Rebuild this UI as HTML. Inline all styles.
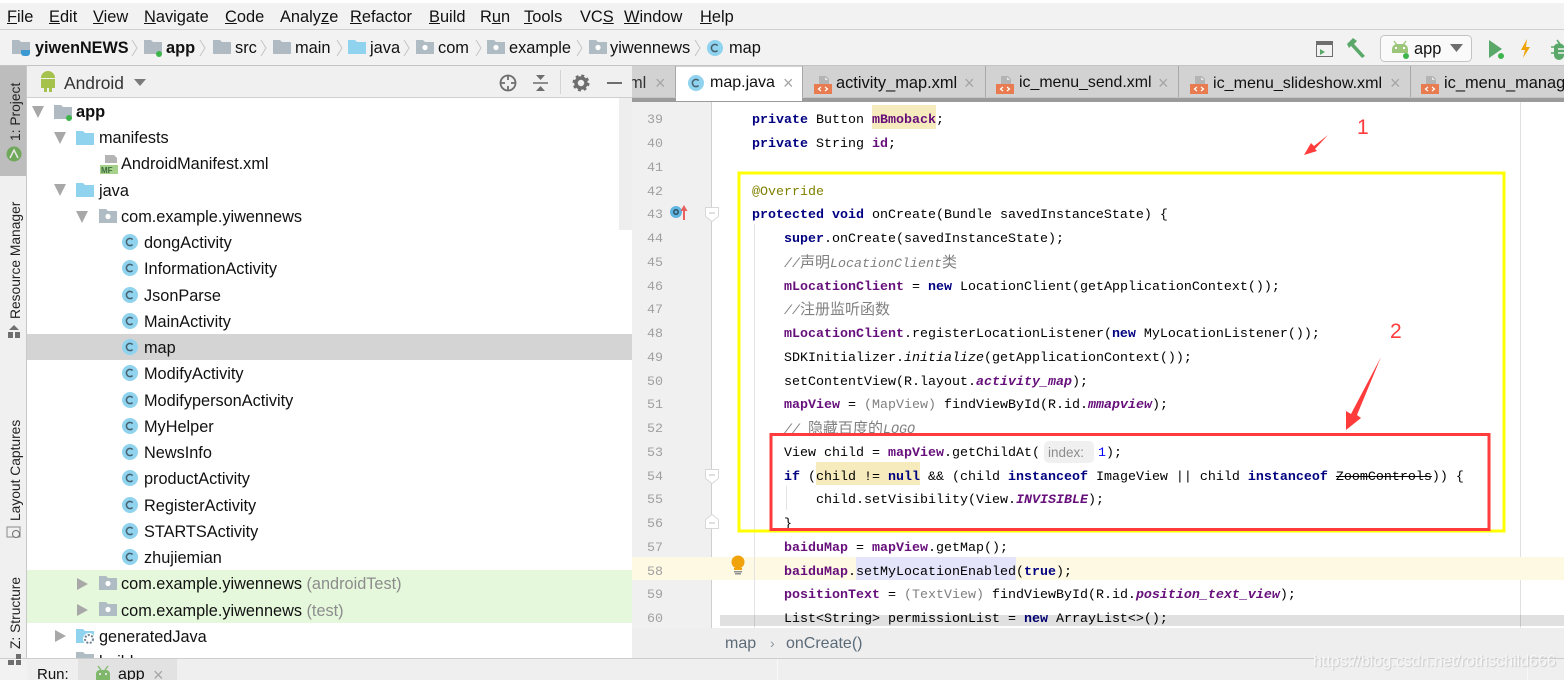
<!DOCTYPE html>
<html><head><meta charset="utf-8"><style>
html,body{margin:0;padding:0;background:#f0f0f0}
#p{position:relative;width:1564px;height:680px;overflow:hidden;background:#f2f2f2;font-family:"Liberation Sans","Noto Sans CJK SC",sans-serif;font-size:16.4px;color:#111}
#p div{position:absolute}
.t{position:absolute;white-space:pre;line-height:20px;height:20px}
.m{font-family:"Liberation Mono","Noto Sans CJK SC",monospace;font-size:13.33px;color:#000;white-space:pre;line-height:20px;position:absolute}
.m b{color:#000080}.m i.f,.m b.f{color:#660e7a;font-weight:bold}
.m .g{color:#808080}
.m .z{font-size:15px;font-style:normal}
.n{font-family:"Liberation Mono",monospace;font-size:13.33px;color:#a0a0a0;position:absolute;left:647px;line-height:20px}
.v{position:absolute;white-space:pre;font-size:13.8px;line-height:16px;color:#222;transform-origin:0 0;transform:rotate(-90deg)}
.x{position:absolute;color:#a5a5a5;font-size:18px;line-height:20px}
u{text-decoration:underline}
</style></head><body><div id="p">
<!-- chrome backgrounds -->
<div style="left:0;top:0;width:1564px;height:3px;background:#fff"></div>
<div style="left:0;top:29px;width:1564px;height:1px;background:#d0d0d0"></div>
<div style="left:0;top:65px;width:1564px;height:1px;background:#c4c4c4"></div>
<div style="left:0;top:66px;width:27px;height:592px;background:#f0f0f0;border-right:1px solid #c8c8c8;box-sizing:border-box"></div>
<div style="left:0;top:66px;width:26px;height:110px;background:#bdbdbd"></div>
<div style="left:27px;top:66px;width:605px;height:31px;background:#f0f0f0"></div>
<div style="left:27px;top:97px;width:605px;height:1px;background:#cfcfcf"></div>
<div style="left:27px;top:98px;width:605px;height:560px;background:#fff"></div>
<div style="left:27px;top:334px;width:605px;height:26px;background:#d4d4d4"></div>
<div style="left:27px;top:570px;width:605px;height:53px;background:#e6f8dc"></div>
<div style="left:619px;top:98px;width:13px;height:132px;background:#eeeeee"></div>
<!-- tab strip -->
<div style="left:632px;top:66px;width:932px;height:31px;background:#d2d2d2"></div>
<div style="left:632px;top:97px;width:932px;height:5px;background:#9b9b9b;border-top:1px solid #c4c4c4;box-sizing:border-box"></div>
<div style="left:676px;top:67px;width:126px;height:34px;background:#fff"></div>
<div style="left:675px;top:66px;width:1px;height:31px;background:#a8a8a8"></div>
<div style="left:802px;top:66px;width:1px;height:31px;background:#a8a8a8"></div>
<div style="left:985px;top:66px;width:1px;height:31px;background:#a8a8a8"></div>
<div style="left:1178px;top:66px;width:1px;height:31px;background:#a8a8a8"></div>
<div style="left:1410px;top:66px;width:1px;height:31px;background:#a8a8a8"></div>
<!-- editor -->
<div style="left:632px;top:102px;width:932px;height:526px;background:#fff"></div>
<div style="left:632px;top:102px;width:79px;height:526px;background:#f0f0f0"></div>
<div style="left:711px;top:102px;width:1px;height:526px;background:#d0d0d0"></div>
<div style="left:1520px;top:102px;width:1px;height:526px;background:#e0e0e0"></div>
<div style="left:632px;top:557px;width:932px;height:23px;background:#fef9e3"></div>
<div style="left:856px;top:557px;width:160px;height:23px;background:#e4e4fb"></div>
<div style="left:872px;top:105px;width:64px;height:24px;background:#f6ebbc"></div>
<div style="left:816px;top:462px;width:104px;height:23px;background:#f6ebbc"></div>
<div style="left:754px;top:224px;width:1px;height:404px;background:#e4e4e4"></div>
<div style="left:786px;top:486px;width:1px;height:24px;background:#e4e4e4"></div>
<div style="left:1044px;top:441px;width:50px;height:22px;background:#f0f0f0;border-radius:5px"></div>

<!-- line numbers -->
<span class="n" style="top:111px">39</span><span class="n" style="top:135px">40</span><span class="n" style="top:159px">41</span><span class="n" style="top:183px">42</span><span class="n" style="top:206px">43</span><span class="n" style="top:230px">44</span><span class="n" style="top:254px">45</span><span class="n" style="top:278px">46</span><span class="n" style="top:301px">47</span><span class="n" style="top:325px">48</span><span class="n" style="top:349px">49</span><span class="n" style="top:373px">50</span><span class="n" style="top:396px">51</span><span class="n" style="top:420px">52</span><span class="n" style="top:444px">53</span><span class="n" style="top:468px">54</span><span class="n" style="top:491px">55</span><span class="n" style="top:515px">56</span><span class="n" style="top:539px">57</span><span class="n" style="top:563px">58</span><span class="n" style="top:586px">59</span><span class="n" style="top:610px">60</span>

<!-- code -->
<span class="m" style="left:752px;top:111px"><b>private</b> Button <b class="f">mBmoback</b>;</span>
<span class="m" style="left:752px;top:135px"><b>private</b> String <b class="f">id</b>;</span>
<span class="m" style="left:752px;top:183px;color:#808000">@Override</span>
<span class="m" style="left:752px;top:206px"><b>protected void</b> onCreate(Bundle savedInstanceState) {</span>
<span class="m" style="left:784px;top:230px"><b>super</b>.onCreate(savedInstanceState);</span>
<span class="m" style="left:784px;top:254px;color:#808080;font-style:italic">//<span class="z">声明</span>LocationClient<span class="z">类</span></span>
<span class="m" style="left:784px;top:278px"><b class="f">mLocationClient</b> = <b>new</b> LocationClient(getApplicationContext());</span>
<span class="m" style="left:784px;top:301px;color:#808080;font-style:italic">//<span class="z">注册监听函数</span></span>
<span class="m" style="left:784px;top:325px"><b class="f">mLocationClient</b>.registerLocationListener(<b>new</b> MyLocationListener());</span>
<span class="m" style="left:784px;top:349px">SDKInitializer.<i>initialize</i>(getApplicationContext());</span>
<span class="m" style="left:784px;top:373px">setContentView(R.layout.<b class="f" style="font-style:italic">activity_map</b>);</span>
<span class="m" style="left:784px;top:396px"><b class="f">mapView</b> = <span class="g">(MapView)</span> findViewById(R.id.<b class="f" style="font-style:italic">mmapview</b>);</span>
<span class="m" style="left:784px;top:420px;color:#808080;font-style:italic">// <span class="z">隐藏百度的</span>LOGO</span>
<span class="m" style="left:784px;top:444px">View child = <b class="f">mapView</b>.getChildAt(</span>
<span class="t" style="left:1048px;top:443px;font-size:13.5px;color:#8c8c8c">index:</span>
<span class="m" style="left:1098px;top:444px"><span style="color:#0000ff">1</span>);</span>
<span class="m" style="left:784px;top:468px"><b>if</b> (child != <b>null</b> &amp;&amp; (child <b>instanceof</b> ImageView || child <b>instanceof</b> <s>ZoomControls</s>)) {</span>
<span class="m" style="left:816px;top:491px">child.setVisibility(View.<b class="f" style="font-style:italic">INVISIBLE</b>);</span>
<span class="m" style="left:784px;top:515px">}</span>
<span class="m" style="left:784px;top:539px"><b class="f">baiduMap</b> = <b class="f">mapView</b>.getMap();</span>
<span class="m" style="left:784px;top:563px"><b class="f">baiduMap</b>.setMyLocationEnabled(<b>true</b>);</span>
<span class="m" style="left:784px;top:586px"><b class="f">positionText</b> = <span class="g">(TextView)</span> findViewById(R.id.<b class="f" style="font-style:italic">position_text_view</b>);</span>
<span class="m" style="left:784px;top:610px">List&lt;String&gt; permissionList = <b>new</b> ArrayList&lt;&gt;();</span>

<!-- scrollbar + editor breadcrumb + bottom -->
<div style="left:720px;top:615px;width:844px;height:11px;background:#000;opacity:.12"></div>
<div style="left:632px;top:628px;width:932px;height:30px;background:#eeeeee"></div>
<div style="left:632px;top:658px;width:932px;height:22px;background:#efefef"></div>
<div style="left:27px;top:658px;width:1537px;height:22px;background:#efefef"></div>
<div style="left:0;top:658px;width:1564px;height:1px;background:#cdcdcd"></div>
<div style="left:78px;top:659px;width:99px;height:21px;background:#e2e2e2"></div>
<div style="left:777px;top:659px;width:1px;height:21px;background:#f8f8f8"></div>
<div style="left:1527px;top:659px;width:1px;height:21px;background:#f8f8f8"></div>
<span class="t" style="left:725px;top:634px;color:#5c6b78;font-size:16px">map</span>
<span class="t" style="left:770px;top:633px;color:#8a96a0;font-size:14px">›</span>
<span class="t" style="left:786px;top:634px;color:#5c6b78;font-size:16px">onCreate()</span>
<span class="t" style="left:37px;top:665px;font-size:15px">Run:</span>
<span class="t" style="left:118px;top:665px;font-size:16px">app</span>
<span class="x" style="left:153px;top:665px">×</span>
<span class="t" style="left:1313px;top:652px;font-size:16px;color:#f7f7f7;text-shadow:1px 1px 1px #c8c8c8">https://blog.csdn.net/rothschild666</span>

<!-- menu -->
<span class="t" style="left:7px;top:7px"><u>F</u>ile</span>
<span class="t" style="left:49px;top:7px"><u>E</u>dit</span>
<span class="t" style="left:93px;top:7px"><u>V</u>iew</span>
<span class="t" style="left:144px;top:7px"><u>N</u>avigate</span>
<span class="t" style="left:225px;top:7px"><u>C</u>ode</span>
<span class="t" style="left:280px;top:7px">Analy<u>z</u>e</span>
<span class="t" style="left:350px;top:7px"><u>R</u>efactor</span>
<span class="t" style="left:429px;top:7px"><u>B</u>uild</span>
<span class="t" style="left:480px;top:7px">R<u>u</u>n</span>
<span class="t" style="left:524px;top:7px"><u>T</u>ools</span>
<span class="t" style="left:580px;top:7px">VC<u>S</u></span>
<span class="t" style="left:624px;top:7px"><u>W</u>indow</span>
<span class="t" style="left:700px;top:7px"><u>H</u>elp</span>

<!-- breadcrumbs -->
<span class="t" style="left:35px;top:38px;font-weight:bold;font-size:16.2px">yiwenNEWS</span>
<span class="t" style="left:166px;top:38px;font-weight:bold">app</span>
<span class="t" style="left:235px;top:38px">src</span>
<span class="t" style="left:295px;top:38px">main</span>
<span class="t" style="left:370px;top:38px">java</span>
<span class="t" style="left:438px;top:38px">com</span>
<span class="t" style="left:509px;top:38px">example</span>
<span class="t" style="left:610px;top:38px">yiwennews</span>
<span class="t" style="left:729px;top:38px">map</span>
<span class="t" style="left:1414px;top:39px;z-index:3">app</span>

<!-- tool window header & tabs -->
<span class="t" style="left:64px;top:73px;color:#333;font-size:17.4px">Android</span>
<span class="t" style="left:629px;top:73px;color:#333;clip-path:inset(0 0 0 3px)">ml</span>
<span class="x" style="left:655px;top:73px">×</span>
<span class="t" style="left:710px;top:73px;font-size:16px">map.java</span>
<span class="x" style="left:783px;top:73px">×</span>
<span class="t" style="left:836px;top:73px">activity_map.xml</span>
<span class="x" style="left:964px;top:73px">×</span>
<span class="t" style="left:1019px;top:73px;font-size:15.9px">ic_menu_send.xml</span>
<span class="x" style="left:1158px;top:73px">×</span>
<span class="t" style="left:1213px;top:73px;font-size:16.1px">ic_menu_slideshow.xml</span>
<span class="x" style="left:1390px;top:73px">×</span>
<span class="t" style="left:1444px;top:73px">ic_menu_manage.xml</span>

<!-- tree -->
<span class="t" style="left:76px;top:102px;font-weight:bold">app</span>
<span class="t" style="left:99px;top:128px;font-size:16.3px">manifests</span>
<span class="t" style="left:121px;top:154px;font-size:16.3px">AndroidManifest.xml</span>
<span class="t" style="left:99px;top:181px;font-size:16.3px">java</span>
<span class="t" style="left:121px;top:207px;font-size:16.3px">com.example.yiwennews</span>
<span class="t" style="left:144px;top:233px;font-size:16.3px">dongActivity</span>
<span class="t" style="left:144px;top:259px;font-size:16.3px">InformationActivity</span>
<span class="t" style="left:144px;top:286px;font-size:16.3px">JsonParse</span>
<span class="t" style="left:144px;top:312px;font-size:16.3px">MainActivity</span>
<span class="t" style="left:144px;top:338px;font-size:16.3px">map</span>
<span class="t" style="left:144px;top:364px;font-size:16.3px">ModifyActivity</span>
<span class="t" style="left:144px;top:391px;font-size:16.3px">ModifypersonActivity</span>
<span class="t" style="left:144px;top:417px;font-size:16.3px">MyHelper</span>
<span class="t" style="left:144px;top:443px;font-size:16.3px">NewsInfo</span>
<span class="t" style="left:144px;top:469px;font-size:16.3px">productActivity</span>
<span class="t" style="left:144px;top:496px;font-size:16.3px">RegisterActivity</span>
<span class="t" style="left:144px;top:522px;font-size:16.3px">STARTSActivity</span>
<span class="t" style="left:144px;top:548px;font-size:16.3px">zhujiemian</span>
<span class="t" style="left:121px;top:574px;font-size:16.3px">com.example.yiwennews <span style="color:#8c8c8c">(androidTest)</span></span>
<span class="t" style="left:121px;top:601px;font-size:16.3px">com.example.yiwennews <span style="color:#8c8c8c">(test)</span></span>
<span class="t" style="left:99px;top:627px;font-size:16.3px">generatedJava</span>
<span class="t" style="left:99px;top:652px;font-size:16.3px;height:6px;overflow:hidden">build</span>

<!-- side labels -->
<span class="v" style="left:8px;top:141px">1: Project</span>
<span class="v" style="left:8px;top:319px">Resource Manager</span>
<span class="v" style="left:8px;top:521px">Layout Captures</span>
<span class="v" style="left:8px;top:649px">Z: Structure</span>

<!-- icons & annotations -->
<svg width="1564" height="680" style="position:absolute;left:0;top:0" xmlns="http://www.w3.org/2000/svg">
<defs>
<path id="fd" d="M0 1h7l2 2h9v12H0z"/>
<g id="cl"><circle cx="8" cy="8" r="8" fill="#8fd3ee"/><circle cx="8" cy="8" r="3.6" fill="none" stroke="#46606e" stroke-width="1.5" stroke-dasharray="17 6" transform="rotate(45 8 8)"/></g>
<g id="pk"><use href="#fd" fill="#b0bcc4"/><circle cx="9" cy="8.5" r="2.6" fill="#fff"/></g>
<g id="xf"><path d="M5 0h7l3 3v7H5z" fill="#b4b4b4"/><path d="M11 1v3h3z" fill="#e8e8e8"/><rect x="0" y="8" width="18" height="10" fill="#e87b4f"/><path d="M7 11l-2.500 2 2.500 2M11 11l2.500 2-2.500 2" stroke="#fff" fill="none" stroke-width="1.200"/></g>
<g id="tr"><path d="M0 0l12 0-6 12z" fill="#a8a8a8"/></g>
<g id="tg"><path d="M0 0l11 6-11 6z" fill="#a8a8a8"/></g>
<g id="chev"><path d="M0 0l5 8-5 8" stroke="#c4c4c4" fill="none"/></g>
<g id="fold"><path d="M.5.5h13v9l-6.500 5-6.500-5z" fill="#fff" stroke="#d8d8d8"/><path d="M4 6h6" stroke="#c0c0c0"/></g>
</defs>

<!-- breadcrumbs icons -->
<use href="#fd" x="12" y="39" fill="#afbac2"/><path d="M21 50h9v3a3 3 0 0 1-3 3h-3a3 3 0 0 1-3-3z" fill="#3c98d0"/>
<use href="#chev" x="132" y="40"/>
<use href="#fd" x="144" y="39" fill="#afbac2"/><circle cx="159" cy="54" r="3" fill="#3db54a"/>
<use href="#chev" x="200" y="40"/>
<use href="#fd" x="213" y="39" fill="#afbac2"/>
<use href="#chev" x="261" y="40"/>
<use href="#fd" x="273" y="39" fill="#afbac2"/>
<use href="#chev" x="337" y="40"/>
<use href="#fd" x="348" y="39" fill="#8fd3ee"/>
<use href="#chev" x="404" y="40"/>
<use href="#pk" x="416" y="39"/>
<use href="#chev" x="476" y="40"/>
<use href="#pk" x="487" y="39"/>
<use href="#chev" x="577" y="40"/>
<use href="#pk" x="589" y="39"/>
<use href="#chev" x="695" y="40"/>
<use href="#cl" x="707" y="40"/>

<!-- toolbar -->
<rect x="1316.500" y="41.500" width="16" height="15" fill="#f2f2f2" stroke="#6e6e6e"/><rect x="1316" y="41" width="17" height="4" fill="#6e6e6e"/><path d="M1320 49l5 3-5 3z" fill="#59a869"/>
<path d="M1347 44l6-6 4 3-3 3 11 12-3 2-11-12-2 2z" fill="#59a869"/>
<rect x="1380.500" y="35.500" width="91" height="26" rx="4" fill="#fafafa" stroke="#c4c4c4"/>
<path d="M1392 53v-4a5 5 0 0 1 5-5h6a5 5 0 0 1 5 5v4z" fill="#9cc77a"/><path d="M1394 41l3 4M1406 41l-3 4" stroke="#9cc77a" stroke-width="1.300"/><rect x="1395" y="47" width="2" height="2" fill="#fff"/><rect x="1403" y="47" width="2" height="2" fill="#fff"/>
<circle cx="1406" cy="56" r="3" fill="#3db54a"/>
<path d="M1450 44h13l-6.500 8z" fill="#6e6e6e"/>
<path d="M1489 40l13 9-13 9z" fill="#59a869"/><circle cx="1501" cy="56" r="3" fill="#3db54a"/>
<path d="M1527 39l-6 11h4l-2 8 7-11h-4z" fill="#f0a30a"/>
<path d="M1554 46a6 6 0 0 1 10 0v9a5 5 0 0 1-10 0z" fill="#59a869"/><path d="M1557 40l3 4M1551 47h3M1551 53h3" stroke="#59a869" stroke-width="1.600"/><path d="M1558 49h6M1558 53h6" stroke="#f2f2f2" stroke-width="1.500"/>

<!-- android header -->
<path d="M41 78a7 7 0 0 1 14 0zM41 79h14v9h-14z" fill="#a4c24c"/><rect x="44" y="88" width="3" height="4" fill="#a4c24c"/><rect x="49" y="88" width="3" height="4" fill="#a4c24c"/>
<path d="M134 79h12l-6 7z" fill="#7a7a7a"/>
<circle cx="508" cy="83" r="7.500" fill="none" stroke="#6e6e6e" stroke-width="1.800"/><path d="M508 75v5M508 86v5M500 83h5M511 83h5" stroke="#6e6e6e" stroke-width="1.800"/>
<path d="M533 83h15" stroke="#6e6e6e" stroke-width="1.500"/><path d="M536 75h9l-4.500 5zM536 91h9l-4.500-5z" fill="#6e6e6e"/>
<rect x="560" y="70" width="1" height="24" fill="#d4d4d4"/>
<circle cx="581" cy="83" r="5" fill="none" stroke="#6e6e6e" stroke-width="3.500"/><circle cx="581" cy="83" r="7.500" fill="none" stroke="#6e6e6e" stroke-width="2" stroke-dasharray="3 2.900"/>
<rect x="607" y="82" width="15" height="2" fill="#6e6e6e"/>

<!-- tab icons -->
<use href="#cl" x="688" y="75"/>
<use href="#xf" x="814" y="76"/>
<use href="#xf" x="996" y="76"/>
<use href="#xf" x="1190" y="76"/>
<use href="#xf" x="1421" y="76"/>

<!-- left rail icons -->
<circle cx="14" cy="154" r="7.500" fill="#6fa85a"/><path d="M10 158l4-8 4 8" stroke="#e8e8e8" fill="none" stroke-width="1.500"/>
<path d="M14 325l5 5h-10zM8 332h5v6H8zM15 332h5v6h-5z" fill="#6e6e6e"/>
<rect x="7" y="527" width="13" height="10" fill="none" stroke="#8a8a8a"/><circle cx="16" cy="534" r="3.500" fill="#f0f0f0" stroke="#6e6e6e"/>
<path d="M10 656h6v5h-6zM18 656h5v5h-5zM18 650h5v5h-5z" fill="#6e6e6e" transform="translate(-2 4)"/>

<!-- tree icons -->
<use href="#tr" x="32" y="106"/>
<use href="#fd" x="54" y="104" fill="#afbac2"/><circle cx="69" cy="118" r="3" fill="#3db54a"/>
<use href="#tr" x="54" y="132"/>
<use href="#fd" x="76" y="130" fill="#8fd3ee"/>
<path d="M105 155h9l3 3v5h-12z" fill="#b4b4b4"/><rect x="100" y="165" width="18" height="9" fill="#a5d18a"/><text x="101" y="173" font-family="Liberation Sans" font-weight="bold" font-size="8" fill="#3c6b3c">MF</text>
<use href="#tr" x="54" y="184"/>
<use href="#fd" x="76" y="182" fill="#8fd3ee"/>
<use href="#tr" x="76" y="211"/>
<use href="#pk" x="99" y="208"/>
<use href="#cl" x="122" y="234"/><use href="#cl" x="122" y="260"/><use href="#cl" x="122" y="287"/><use href="#cl" x="122" y="313"/><use href="#cl" x="122" y="339"/><use href="#cl" x="122" y="365"/><use href="#cl" x="122" y="392"/><use href="#cl" x="122" y="418"/><use href="#cl" x="122" y="444"/><use href="#cl" x="122" y="470"/><use href="#cl" x="122" y="497"/><use href="#cl" x="122" y="523"/><use href="#cl" x="122" y="549"/>
<use href="#tg" x="77" y="578"/><use href="#pk" x="99" y="575"/>
<use href="#tg" x="77" y="604"/><use href="#pk" x="99" y="601"/>
<use href="#tg" x="55" y="630"/><use href="#fd" x="76" y="628" fill="#8fd3ee"/><circle cx="89" cy="639" r="6" fill="#fff"/><circle cx="89" cy="639" r="4" fill="none" stroke="#6e8290" stroke-width="2" stroke-dasharray="2 1.500"/>
<path d="M76 652h7l2 2h9v4H76z" fill="#b0bcc4"/>
<!-- run tab android -->
<path d="M96 680v-6a4 4 0 0 1 4-4h6a4 4 0 0 1 4 4v6z" fill="#7fb86a"/><path d="M98 666l3 4M108 666l-3 4" stroke="#7fb86a" stroke-width="1.300"/><rect x="99" y="673" width="2" height="2" fill="#e2e2e2"/><rect x="105" y="673" width="2" height="2" fill="#e2e2e2"/>

<!-- gutter icons -->
<circle cx="676" cy="212" r="6" fill="#60b6e0"/><circle cx="676" cy="212" r="2.200" fill="none" stroke="#2e4e60" stroke-width="1.500"/>
<path d="M684 220v-12" stroke="#e86060" stroke-width="2"/><path d="M680.500 211l3.500-6 3.500 6z" fill="#e86060"/>
<use href="#fold" x="705" y="207"/>
<use href="#fold" x="705" y="469"/>
<use href="#fold" x="705" y="514" transform="rotate(180 712 521.500)"/>
<circle cx="738" cy="562" r="6.500" fill="#f0a30a"/><rect x="734" y="568" width="8" height="2" fill="#f0a30a"/><rect x="734" y="571" width="8" height="1.500" fill="#909090"/><rect x="735" y="573" width="6" height="1.500" fill="#909090"/>

<!-- annotations -->
<rect x="739" y="173" width="765" height="358" fill="none" stroke="#ffff00" stroke-width="3"/>
<rect x="771" y="434.500" width="718" height="95" fill="none" stroke="#ff3b3b" stroke-width="3"/>
<text x="1357" y="134" font-family="Liberation Sans" font-size="21" fill="#ff3b3b">1</text>
<text x="1390" y="338" font-family="Liberation Sans" font-size="21" fill="#ff3b3b">2</text>
<path d="M1328 135L1314 146 1311 143 1304 155 1317 151 1315 149z" fill="#ff3b3b"/>
<path d="M1381 357L1351 414 1346 411 1346 430 1361 418 1357 415z" fill="#ff3b3b"/>
</svg>
</div></body></html>
